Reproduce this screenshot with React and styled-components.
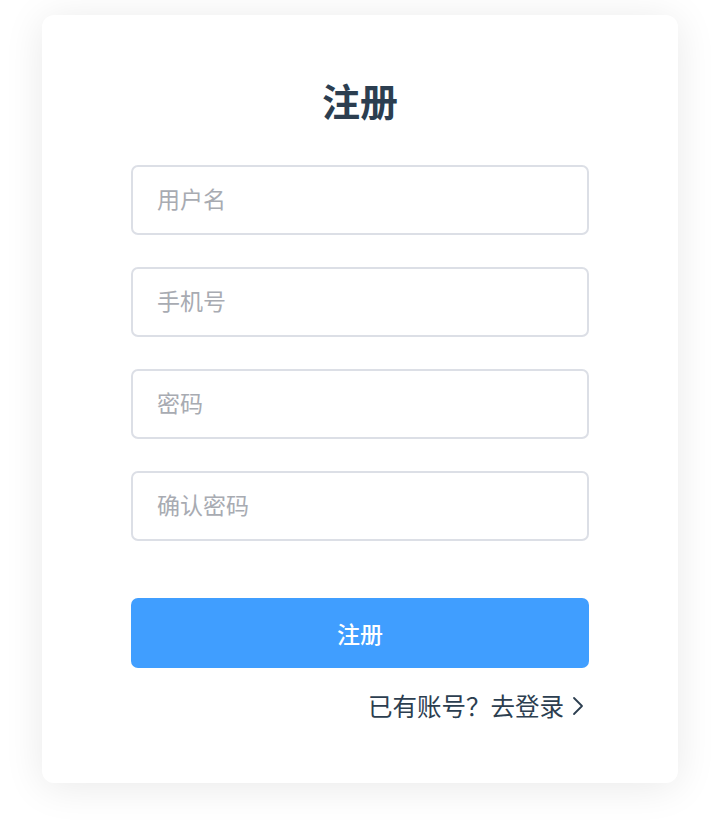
import styled, { createGlobalStyle } from 'styled-components';

const GlobalStyle = createGlobalStyle`
  html, body {
    margin: 0;
    padding: 0;
    background: #fff;
    font-family: 'Noto Sans CJK SC', 'Noto Sans', sans-serif;
  }
  * {
    box-sizing: border-box;
  }
`;

const Page = styled.div`
  display: flex;
  justify-content: center;
  padding-top: 15px;
  padding-bottom: 41px;
`;

const Card = styled.form`
  width: 636px;
  padding: 60px 89px 61px;
  background: #fff;
  border-radius: 12px;
  box-shadow: 0 4px 40px rgba(0, 0, 0, 0.09);
  display: flex;
  flex-direction: column;
`;

const Title = styled.h2`
  margin: 0 0 40px;
  font-size: 38px;
  line-height: 50px;
  font-weight: 700;
  color: #2c3e50;
  text-align: center;
`;

const Fields = styled.div`
  display: flex;
  flex-direction: column;
  gap: 32px;
`;

const Input = styled.input`
  width: 100%;
  height: 70px;
  padding: 0 24px 4px;
  border: 2px solid #dcdfe6;
  border-radius: 7px;
  font-family: inherit;
  font-size: 23px;
  color: #606266;
  outline: none;
  &::placeholder {
    color: #a8abb2;
  }
`;

const SubmitButton = styled.button`
  margin-top: 57px;
  height: 70px;
  width: 100%;
  border: none;
  border-radius: 7px;
  background-color: #409eff;
  color: #fff;
  font-family: inherit;
  font-size: 23px;
  font-weight: 500;
  cursor: pointer;
`;

const LinkRow = styled.div`
  margin-top: 22px;
  display: flex;
  justify-content: flex-end;
  padding-right: 5px;
`;

const LoginLink = styled.a`
  display: flex;
  align-items: center;
  gap: 8px;
  font-size: 24.5px;
  line-height: 32px;
  color: #2c3e50;
  text-decoration: none;
  cursor: pointer;
`;

function ChevronRight() {
  return (
    <svg width="12" height="20" viewBox="0 0 12 20" fill="none">
      <path d="M2 2l8 8-8 8" stroke="#2c3e50" strokeWidth="1.8" strokeLinecap="round" strokeLinejoin="round" />
    </svg>
  );
}

export default function App() {
  const fields = [
    { name: 'username', type: 'text', placeholder: '用户名' },
    { name: 'phone', type: 'text', placeholder: '手机号' },
    { name: 'password', type: 'password', placeholder: '密码' },
    { name: 'confirm', type: 'password', placeholder: '确认密码' },
  ];

  return (
    <>
      <GlobalStyle />
      <Page>
        <Card onSubmit={(e) => e.preventDefault()}>
          <Title>注册</Title>
          <Fields>
            {fields.map((f) => (
              <Input key={f.name} name={f.name} type={f.type} placeholder={f.placeholder} />
            ))}
          </Fields>
          <SubmitButton type="submit">注册</SubmitButton>
          <LinkRow>
            <LoginLink>
              已有账号？去登录
              <ChevronRight />
            </LoginLink>
          </LinkRow>
        </Card>
      </Page>
    </>
  );
}
